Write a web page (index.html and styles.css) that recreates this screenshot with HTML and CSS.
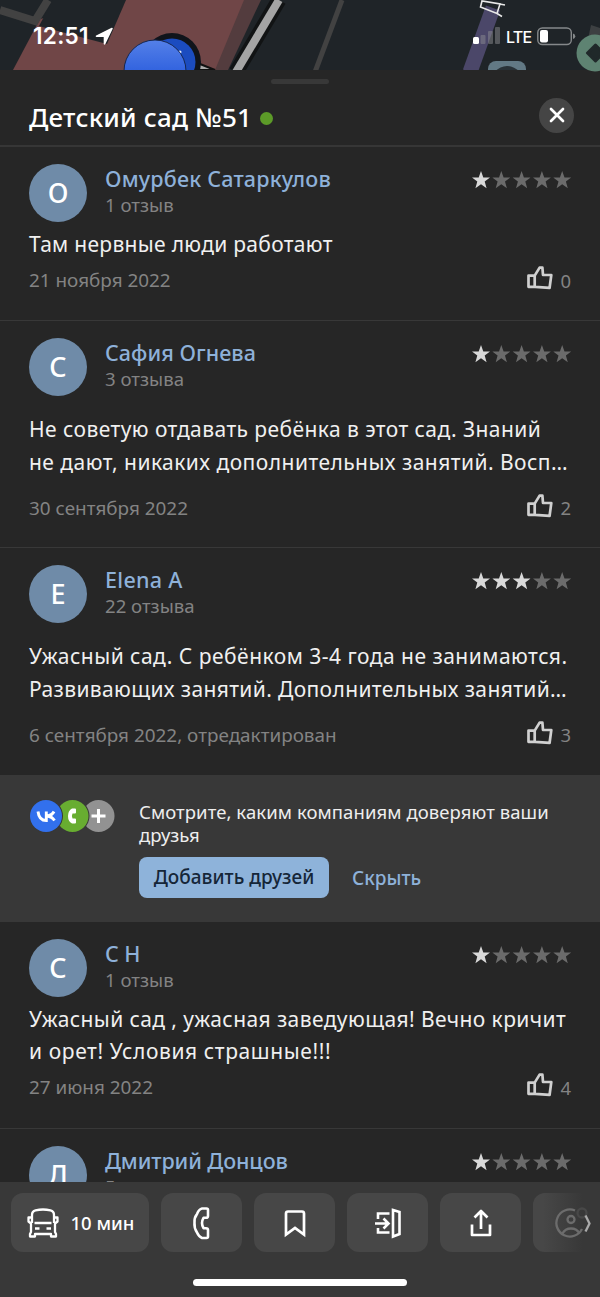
FILE: index.html
```html
<!DOCTYPE html>
<html lang="ru">
<head>
<meta charset="utf-8">
<title>Детский сад №51</title>
<link rel="stylesheet" href="styles.css">
</head>
<body>
<svg class="defs" width="0" height="0">
  <symbol id="star" viewBox="0 0 18 18"><path d="M9 0 11.300 6.400H18L12.700 10.500 14.600 17.200 9 13.300 3.400 17.200 5.300 10.500 0 6.400H6.700Z"/></symbol>
  <symbol id="like" viewBox="0 0 26 24"><path d="M1.5 9.6H7.7L12.6 1.6H15.4L16 9H24.3L22.6 21.8 8 20.8H1.5ZM7.7 9.6V20.8" fill="none" stroke="currentColor" stroke-width="2.7" stroke-linejoin="round"/></symbol>
  <symbol id="stars1" viewBox="0 0 100 18"><g fill="#d9d9d9"><use href="#star" width="18" height="18"/></g><g fill="#6b6b6b"><use href="#star" x="20.3" width="18" height="18"/><use href="#star" x="40.6" width="18" height="18"/><use href="#star" x="60.9" width="18" height="18"/><use href="#star" x="81.2" width="18" height="18"/></g></symbol>
  <symbol id="stars3" viewBox="0 0 100 18"><g fill="#d9d9d9"><use href="#star" width="18" height="18"/><use href="#star" x="20.3" width="18" height="18"/><use href="#star" x="40.6" width="18" height="18"/></g><g fill="#6b6b6b"><use href="#star" x="60.9" width="18" height="18"/><use href="#star" x="81.2" width="18" height="18"/></g></symbol>
</svg>
<div class="screen">
  <div class="map">
    <svg class="map-art" width="600" height="78" viewBox="0 0 600 78">
      <defs><linearGradient id="pin" x1="0" y1="0" x2="0" y2="1"><stop offset="0" stop-color="#5480e8"/><stop offset=".5" stop-color="#3263df"/></linearGradient></defs>
      <rect width="600" height="78" fill="#1f2428"/>
      <path d="M126 0H260L218 70H13L40 19Z" fill="#704647"/>
      <path d="M244 0H261L228 70H215Z" fill="#533c3e"/>
      <path d="M53 0H126L107 44 39 26Z" fill="#1f2428"/>
      <path d="M0 10 35 21 48 0" fill="none" stroke="#424242" stroke-width="8"/>
      <path d="M279 0 236 72" stroke="#111314" stroke-width="15"/>
      <path d="M279 0 236 72" stroke="#a4a4a4" stroke-width="8"/>
      <path d="M342 0 315 72" stroke="#424242" stroke-width="5"/>
      <path d="M493 8 470 72" stroke="#4b4769" stroke-width="15"/>
      <path d="M482 1 480.500 7 497 13.500 500 4ZM499.500 4 505 5M497 13.500 502 16.500" fill="none" stroke="#e8e8e8" stroke-width="1.600"/>
      <path d="M591 25 600 28V39H588Z" fill="#3d4042"/>
      <rect x="488" y="61" width="38" height="30" rx="8" fill="#627985"/>
      <path d="M494 72Q507 60 520 72" fill="#293238"/>
      <path d="M195 62 215 70H198Z" fill="#aaa" stroke="#111" stroke-width="2"/>
      <circle cx="172" cy="62" r="29" fill="#10141b"/><circle cx="172" cy="62" r="23.5" fill="#1b4cc0"/><circle cx="180" cy="52" r="1.5" fill="#e8f0ff"/>
      <circle cx="155" cy="71" r="31" fill="url(#pin)" stroke="#152650"/>
      <rect y="70" width="600" height="8" fill="#262626"/>
      <circle cx="595" cy="53" r="18.5" fill="#5e8372"/><path d="M595.500 45 603.500 53 595.500 61 587.500 53Z" fill="#20292a" stroke="#20292a" stroke-width="3" stroke-linejoin="round"/>
    </svg>
    <div class="status">
      <span class="clock">12:51</span>
      <svg class="locate" width="19" height="19" viewBox="0 0 19 19"><path d="M17 1.500 9.500 16.800V9.300H1.500Z" fill="#fff" stroke="#fff" stroke-width="1.600" stroke-linejoin="round"/></svg>
      <svg class="signal" width="28" height="18" viewBox="0 0 28 18"><rect y="10" width="6" height="7" rx="1.5" fill="#fff"/><g fill="#8c8c91" opacity=".5"><rect x="7.5" y="8" width="5" height="9" rx="1"/><rect x="15" y="4" width="5" height="13" rx="1"/><rect x="22" y="0" width="5" height="17" rx="1"/></g></svg>
      <span class="net">LTE</span>
      <svg class="battery" width="39" height="19" viewBox="0 0 39 19"><rect x=".8" y="1" width="33.5" height="16.5" rx="4.5" fill="none" stroke="#85888a" stroke-width="1.4"/><rect x="3" y="3" width="8" height="12.5" rx="2" fill="#fff"/><path d="M36 6.5Q38.3 7 38.3 9.3T36 12Z" fill="#85888a"/></svg>
    </div>
  </div>

  <header class="head">
    <div class="grabber"></div>
    <div class="title-row">
      <h1 class="title">Детский сад №51</h1><span class="online"></span>
      <span class="close"><svg width="16" height="16" viewBox="0 0 16 16"><path d="M2 2 14 14M14 2 2 14" stroke="#fff" stroke-width="2.7" stroke-linecap="round"/></svg></span>
    </div>
  </header>

  <main class="feed">
    <article class="review">
      <div class="top"><span class="avatar">О</span><div class="who"><b class="name n1">Омурбек Сатаркулов</b><span class="count">1 отзыв</span></div><svg class="stars" width="100" height="18"><use href="#stars1"/></svg></div>
      <p class="body"><span class="b1">Там нервные люди работают</span></p>
      <div class="foot"><span class="date">21 ноября 2022</span><span class="likes"><svg width="26" height="24"><use href="#like"/></svg>0</span></div>
    </article>
    <article class="review roomy">
      <div class="top"><span class="avatar">С</span><div class="who"><b class="name n2">Сафия Огнева</b><span class="count">3 отзыва</span></div><svg class="stars" width="100" height="18"><use href="#stars1"/></svg></div>
      <p class="body"><span class="b2">Не советую отдавать ребёнка в этот сад. Знаний</span><br><span class="b3">не дают, никаких дополнительных занятий. Восп…</span></p>
      <div class="foot"><span class="date">30 сентября 2022</span><span class="likes"><svg width="26" height="24"><use href="#like"/></svg>2</span></div>
    </article>
    <article class="review roomy">
      <div class="top"><span class="avatar">E</span><div class="who"><b class="name n3">Elena A</b><span class="count">22 отзыва</span></div><svg class="stars" width="100" height="18"><use href="#stars3"/></svg></div>
      <p class="body"><span class="b4">Ужасный сад. С ребёнком 3-4 года не занимаются.</span><br><span class="b5">Развивающих занятий. Дополнительных занятий…</span></p>
      <div class="foot"><span class="date">6 сентября 2022, отредактирован</span><span class="likes"><svg width="26" height="24"><use href="#like"/></svg>3</span></div>
    </article>

    <section class="friends">
      <svg class="networks" width="86" height="34" viewBox="0 0 86 34">
        <circle cx="69.500" cy="17" r="16" fill="#929292"/><path d="M69.500 10V24M62.500 17H76.500" stroke="#fff" stroke-width="3"/>
        <circle cx="43.500" cy="17" r="17" fill="#383838"/><circle cx="43.500" cy="17" r="16" fill="#68ad31"/>
        <path d="M46 9.500H43Q39 11.500 39 17T43 24.500H46Q47 24.500 47 23.500V20.500Q47 19.500 46 19.500H43.500Q42.300 17 43.500 14.500H46Q47 14.500 47 13.500V10.500Q47 9.500 46 9.500Z" fill="#fff"/>
        <circle cx="17" cy="17" r="17" fill="#383838"/><circle cx="17" cy="17" r="16" fill="#3270ed"/>
        <path d="M9 12.500Q10 21.500 17.300 21.500V12.500M25 12.500Q23 16.500 18 17Q23 17.500 25.500 21.500" fill="none" stroke="#fff" stroke-width="2.900"/>
      </svg>
      <div class="pitch">
        <p class="ask"><span class="a1">Смотрите, каким компаниям доверяют ваши</span><br>друзья</p>
        <div class="actions"><span class="add">Добавить друзей</span><span class="hide">Скрыть</span></div>
      </div>
    </section>

    <article class="review">
      <div class="top"><span class="avatar">С</span><div class="who"><b class="name n4">С Н</b><span class="count">1 отзыв</span></div><svg class="stars" width="100" height="18"><use href="#stars1"/></svg></div>
      <p class="body"><span class="b6">Ужасный сад , ужасная заведующая! Вечно кричит</span><br><span class="b7">и орет! Условия страшные!!!</span></p>
      <div class="foot"><span class="date">27 июня 2022</span><span class="likes"><svg width="26" height="24"><use href="#like"/></svg>4</span></div>
    </article>
    <article class="review">
      <div class="top"><span class="avatar">Д</span><div class="who"><b class="name n5">Дмитрий Донцов</b><span class="count">5 отзывов</span></div><svg class="stars" width="100" height="18"><use href="#stars1"/></svg></div>
    </article>
  </main>

  <footer class="dock">
    <div class="buttons">
      <span class="btn route"><svg width="34" height="32" viewBox="0 0 34 32" fill="none" stroke="#fff" stroke-width="2.300" stroke-linejoin="round"><path d="M6 16V8Q6 4 9.500 3.300Q17 1.700 24.500 3.300Q28 4 28 8V16M5.500 10.500H2.500V14.500L5 16.500V25L4 27V29.500H9V27H25V29.500H30V27L29 25V16.500L31.500 14.500V10.500H28.500M8.500 16H25.500M9 21.500H13.500M20.500 21.500H25"/></svg><span>10 мин</span></span>
      <span class="btn"><svg width="34" height="34" viewBox="0 0 34 34"><path d="M17 2.500H21.500Q23 2.500 23 4V10Q23 11.800 21 11.800H18.500Q15.500 17 18.500 22.200H21Q23 22.200 23 24V30.500Q23 32 21.500 32H17Q14 31 12 26.500Q9 22 9.500 17Q9 12 12 8Q14 3 17 2.500Z" fill="none" stroke="#fff" stroke-width="2.600" stroke-linejoin="round"/></svg></span>
      <span class="btn"><svg width="34" height="34" viewBox="0 0 34 34"><path d="M10 5.500H24Q26 5.500 26 7.500V28.500L17 22 8 28.500V7.500Q8 5.500 10 5.500Z" fill="none" stroke="#fff" stroke-width="2.700"/></svg></span>
      <span class="btn"><svg width="34" height="34" viewBox="0 0 34 34" fill="none" stroke="#fff" stroke-width="2.600"><path d="M7 13V7.500H18.500M7 22V26.500H18.500M4 17.500H17M12.500 12.500 17.500 17.500 12.500 22.500M22 4 28.500 6V28L22 30.500Z"/></svg></span>
      <span class="btn"><svg width="34" height="34" viewBox="0 0 34 34"><path d="M8 18.500V29H26V18.500M17 23V6M10.500 11.500 17 5 23.500 11.500" fill="none" stroke="#fff" stroke-width="2.700" stroke-linejoin="round"/></svg></span>
      <span class="btn faded"><svg width="40" height="34" viewBox="0 0 40 34" fill="none" stroke="#6c6c6c" stroke-width="2.300"><path d="M21 4.500A13.500 13.500 0 1 0 28 23"/><circle cx="17" cy="13.500" r="3.500"/><path d="M8.500 27.500Q11 22.500 17 22.500T25.500 27.500"/><circle cx="28" cy="7" r="4.500" stroke="#484848"/><path d="M31.500 9.500 35.500 17.500 31.500 25.500" stroke="#aaa"/></svg></span>
    </div>
    <div class="home"></div>
  </footer>
</div>
</body>
</html>
```
FILE: styles.css
```css
* { box-sizing: border-box; }
body { margin: 0; background: #262626; font-family: "Noto Sans", sans-serif; color: #f0f0f0; }
.defs { position: absolute; }
.screen { width: 600px; height: 1297px; display: flex; flex-direction: column; overflow: hidden; }
h1, p { margin: 0; font-weight: 400; }
svg { flex: none; display: block; }
span { white-space: nowrap; }

.map { position: relative; height: 70px; flex: none; }
.map-art { position: absolute; left: 0; top: 0; }
.status { position: relative; display: flex; align-items: center; height: 72px; padding-left: 33px; color: #fff; }
.clock { width: 62px; font: 600 22.5px/24px Inter, sans-serif; letter-spacing: .3px; }
.signal { margin-left: 359px; }
.net { width: 31px; margin-left: 5px; font: 500 16px/24px Inter, sans-serif; letter-spacing: -.7px; margin-top: 1px; }
.battery { margin-left: 0; }

.head { position: relative; height: 77px; flex: none; border-bottom: 2px solid #363636; }
.grabber { width: 58px; height: 5px; border-radius: 3px; background: #383838; margin: 9px auto 0; }
.title-row { display: flex; align-items: center; height: 36px; margin: 13px 26px 0 29px; }
.title { font-size: 26px; line-height: 36px; font-weight: 500; color: #fff; margin-top: 3px; white-space: nowrap; width: 222px; letter-spacing: .2px; }
.online { width: 13px; height: 13px; border-radius: 50%; background: #5c9a28; margin: 6px 0 0 9px; }
.close { width: 35px; height: 35px; border-radius: 50%; background: #454545; display: grid; place-items: center; margin-left: auto; }

.feed { flex: 1; min-height: 0; overflow: hidden; }
.review { padding: 17px 29px 0; height: 174px; border-bottom: 1px solid #383838; }
.review.roomy { height: 227.300px; }
.friends + .review { height: 207px; }
.top { display: flex; height: 58px; }
.avatar { width: 58px; height: 58px; border-radius: 50%; background: #6f8ba8; color: #fff; font-size: 27px; font-weight: 500; line-height: 57px; text-align: center; flex: none; }
.who { display: flex; flex-direction: column; margin-left: 18px; flex: 1; }
.name { font-size: 21.500px; line-height: 30px; font-weight: 500; color: #8eb1d9; white-space: nowrap; }
.count { font-size: 18.600px; line-height: 22px; color: #838383; }
.stars { margin: 7px -1px 0 0; }
.body { margin-top: 6px; font-size: 21px; line-height: 32.500px; color: #f0f0f0; white-space: nowrap; }
.roomy .body { margin-top: 17px; }
.foot { display: flex; justify-content: space-between; align-items: center; height: 24px; margin-top: 7.500px; font-size: 18.900px; color: #838383; }
.roomy .foot { margin-top: 17.500px; }
.likes { display: flex; align-items: center; gap: 7px; font-size: 18.500px; }
.likes svg { color: #d0d0d0; margin-top: -4px; }

/* per-line tracking */
.n1 { letter-spacing: .2px; }
.n2 { letter-spacing: .05px; }
.n3 { letter-spacing: .3px; }
.n5 { letter-spacing: -.1px; }
.b1 { letter-spacing: .3px; }
.b2 { letter-spacing: .43px; }
.b3 { letter-spacing: .46px; }
.b4 { letter-spacing: .49px; }
.b5 { letter-spacing: .37px; }
.b6 { letter-spacing: .41px; }
.b7 { letter-spacing: .6px; }
.a1 { letter-spacing: .08px; }

.friends { display: flex; height: 146px; padding: 24px 29px 0; background: #383838; }
.networks { margin-top: -1px; }
.pitch { margin-left: 24px; }
.ask { font-size: 18.500px; line-height: 23px; color: #eee; white-space: nowrap; }
.actions { display: flex; align-items: center; margin-top: 11.500px; gap: 23px; font-size: 19px; }
.add { width: 190px; height: 41px; line-height: 41px; border-radius: 8px; background: #8eb3da; color: #152638; text-align: center; font-weight: 500; }
.hide { color: #8eb1d9; font-weight: 500; }

.dock { flex: none; height: 115px; background: #383838; padding-top: 11px; }
.buttons { display: flex; gap: 12px; margin-left: 11px; width: 589px; overflow: hidden; }
.btn { width: 81px; height: 59px; border-radius: 12px; background: #474747; display: flex; justify-content: center; align-items: center; flex: none; }
.route { width: 138px; gap: 11px; font-size: 18.500px; font-weight: 500; color: #fff; }
.faded { background: linear-gradient(90deg, #474747 10px, #383838 50px); }
.home { width: 214px; height: 7px; border-radius: 4px; background: #fff; margin: 27px auto 0; }
```
